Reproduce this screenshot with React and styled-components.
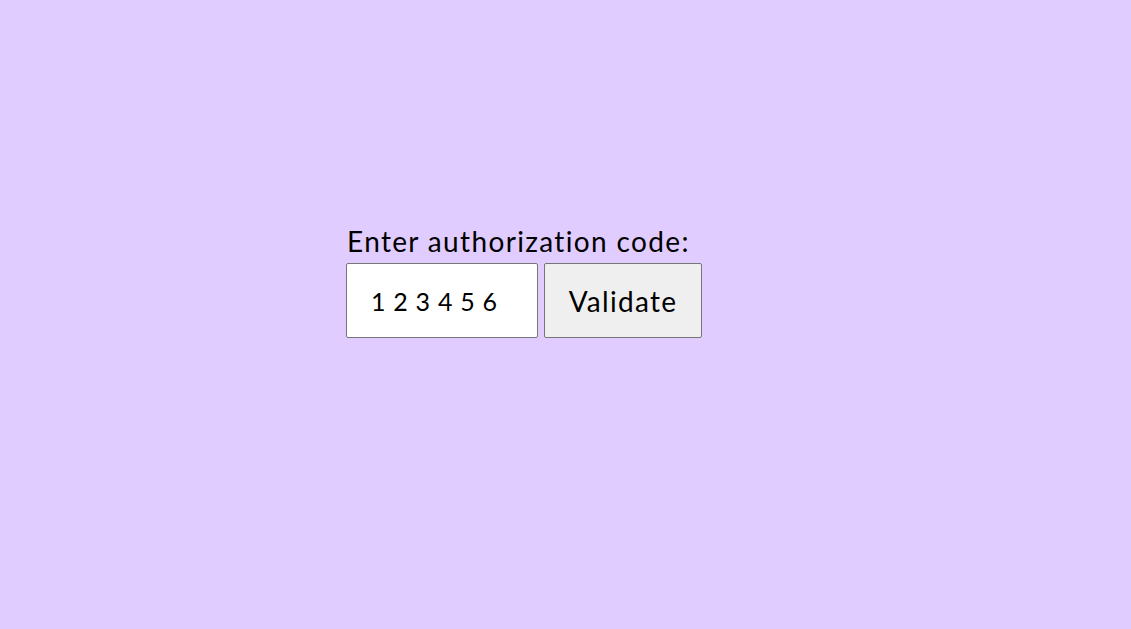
import React from 'react'
import styled, { createGlobalStyle } from 'styled-components'

const Global = createGlobalStyle`
  html, body {
    margin: 0;
    background: #e0ccff;
    font-family: Lato, "Open Sans", sans-serif;
  }
`;

const Page = styled.div`
  min-height: 629px;
  box-sizing: border-box;
  padding: 223px 0 0 346px;
`;

const Form = styled.form`
  display: flex;
  flex-direction: column;
  width: fit-content;
`;

const Label = styled.label`
  font-size: 28px;
  color: #000;
  line-height: 36px;
  letter-spacing: 1.35px;
  padding-left: 1px;
  margin-bottom: 4px;
  white-space: nowrap;
`;

const Row = styled.div`
  display: flex;
  gap: 6px;
`;

const CodeInput = styled.input`
  width: 192px;
  height: 75px;
  box-sizing: border-box;
  border: 1px solid #767676;
  border-radius: 2px;
  background: #fff;
  padding: 0 0 0 24px;
  font-family: inherit;
  font-size: 25px;
  letter-spacing: 0.7px;
  color: #000;
  outline: none;
`;

const Button = styled.button`
  width: 158px;
  height: 75px;
  box-sizing: border-box;
  border: 1px solid #767676;
  border-radius: 2px;
  background: #efefef;
  font-family: inherit;
  font-size: 28px;
  letter-spacing: 1.3px;
  color: #000;
  padding: 0;
`;

export default function App() {
  return (
    <Page>
      <Global />
      <Form onSubmit={e => e.preventDefault()}>
        <Label htmlFor="code">Enter authorization code:</Label>
        <Row>
          <CodeInput id="code" defaultValue="1 2 3 4 5 6" />
          <Button type="submit">Validate</Button>
        </Row>
      </Form>
    </Page>
  )
}
